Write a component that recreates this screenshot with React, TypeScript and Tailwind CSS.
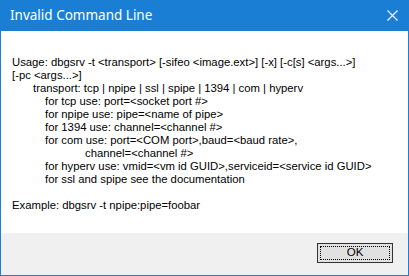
import React from 'react';

const font = { fontFamily: '"Liberation Sans", Arial, sans-serif' };

const Lines: { text: string; indent: string }[] = [
  { text: 'Usage: dbgsrv -t <transport> [-sifeo <image.ext>] [-x] [-c[s] <args...>]', indent: 'pl-0' },
  { text: '[-pc <args...>]', indent: 'pl-0' },
  { text: 'transport: tcp | npipe | ssl | spipe | 1394 | com | hyperv', indent: 'pl-[21px]' },
  { text: 'for tcp use: port=<socket port #>', indent: 'pl-[33px]' },
  { text: 'for npipe use: pipe=<name of pipe>', indent: 'pl-[33px]' },
  { text: 'for 1394 use: channel=<channel #>', indent: 'pl-[33px]' },
  { text: 'for com use: port=<COM port>,baud=<baud rate>,', indent: 'pl-[33px]' },
  { text: 'channel=<channel #>', indent: 'pl-[73px]' },
  { text: 'for hyperv use: vmid=<vm id GUID>,serviceid=<service id GUID>', indent: 'pl-[33px]' },
  { text: 'for ssl and spipe see the documentation', indent: 'pl-[33px]' },
];

export default function App() {
  return (
    <div className="w-[409px] h-[276px] flex flex-col bg-[#1a7fd4]" style={font}>
      {/* title bar */}
      <div className="h-[31px] flex items-center justify-between bg-[#1a7fd4] text-white">
        <span className="pl-[10px] text-[13.5px]" style={{ fontFamily: '"Noto Sans", "Open Sans", sans-serif' }}>
          Invalid Command Line
        </span>
        <svg className="mr-[11px]" width="11" height="11" viewBox="0 0 11 11">
          <path d="M0.5 0.5 L10.5 10.5 M10.5 0.5 L0.5 10.5" stroke="white" strokeWidth="1.1" />
        </svg>
      </div>

      <div className="flex-1 flex flex-col mx-px mb-px">
        {/* message */}
        <div className="h-[202px] bg-white pl-[11px] pt-[25px] text-[11.3px] leading-[13px] text-black">
          {Lines.map((l, i) => (
            <div key={i} className={`${l.indent} whitespace-pre`}>{l.text}</div>
          ))}
          <div className="h-[13px]" />
          <div>Example: dbgsrv -t npipe:pipe=foobar</div>
        </div>

        {/* footer */}
        <div className="flex-1 bg-[#f0f0f0] flex justify-end items-start pt-[10px] pr-[15px]">
          <button className="w-[76px] h-[20px] border border-[#333] bg-[#e1e1e1] p-[2px] flex">
            <span className="flex-1 flex items-center justify-center border border-dotted border-black text-[11.5px] text-black">
              OK
            </span>
          </button>
        </div>
      </div>
    </div>
  );
}
